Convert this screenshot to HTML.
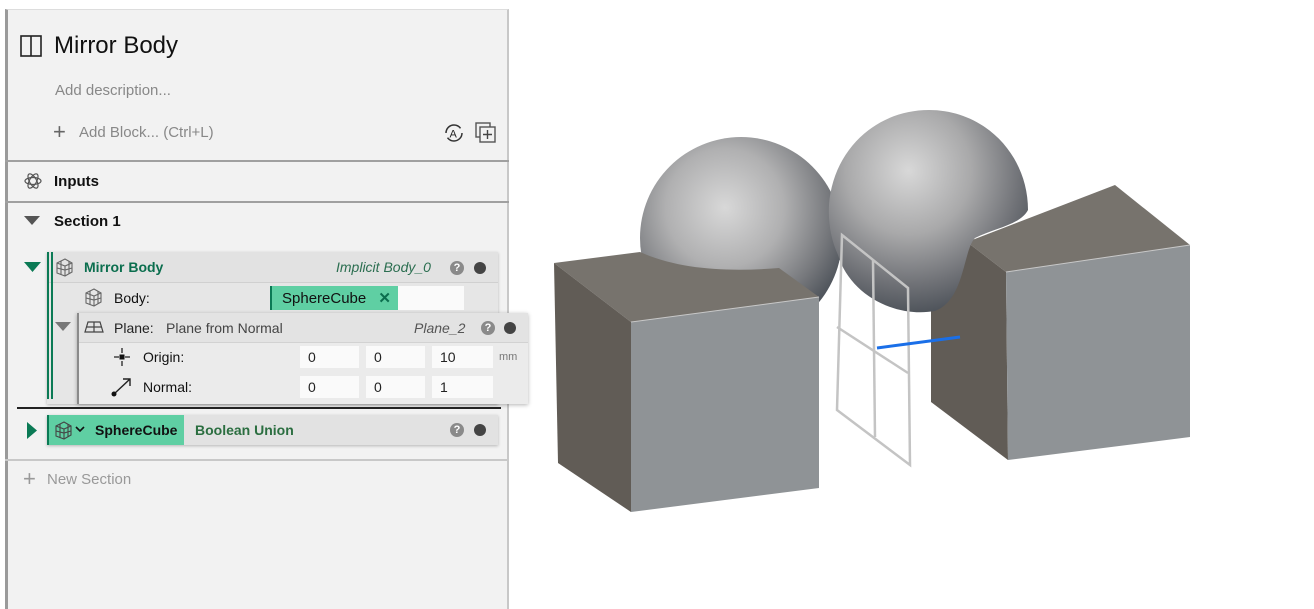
<!DOCTYPE html>
<html><head><style>
*{margin:0;padding:0;box-sizing:border-box}
body{width:1314px;height:596px;background:#fff;position:relative;overflow:hidden;font-family:"Liberation Sans",Arial,sans-serif}
.a{position:absolute;white-space:nowrap}
.panel{position:absolute;left:5px;top:9px;width:504px;height:600px;background:#f2f2f2;border-left:3px solid #9a9a9a;border-right:2px solid #c8c8c8;border-top:1px solid #ddd}
.hl{position:absolute;height:2px;background:#a0a0a0}
.t{font-size:15px;color:#111}
.box{position:absolute;background:#fafafa;height:22px;font-size:14px;color:#222;padding:3px 8px}
.q{position:absolute;width:14px;height:14px;border-radius:50%;background:#8a8a8a;color:#fff;font-size:11px;font-weight:bold;text-align:center;line-height:14px}
.d{position:absolute;width:12px;height:12px;border-radius:50%;background:#444}
</style></head><body>
<div class="panel"></div>
<svg class="a" style="left:20px;top:35px" width="22" height="22"><rect x="1" y="1" width="20" height="20" fill="none" stroke="#222" stroke-width="1.6"/><line x1="11" y1="1" x2="11" y2="21" stroke="#222" stroke-width="1.6"/></svg>
<div class="a" style="left:54px;top:32px;font-size:24px;color:#111">Mirror Body</div>
<div class="a" style="left:55px;top:82px;font-size:15px;color:#888">Add description...</div>
<div class="a" style="left:53px;top:119px;font-size:22px;color:#666;font-weight:300">+</div>
<div class="a" style="left:79px;top:124px;font-size:15px;color:#888">Add Block... (Ctrl+L)</div>
<svg class="a" style="left:443px;top:122px" width="22" height="22"><circle cx="11" cy="11" r="8" fill="none" stroke="#333" stroke-width="1.5" stroke-dasharray="20 5"/><text x="6.5" y="15.5" font-size="11" font-family="Liberation Sans" fill="#222">A</text></svg>
<svg class="a" style="left:474px;top:121px" width="24" height="24"><rect x="2" y="2" width="14" height="14" fill="none" stroke="#555" stroke-width="1.4"/><rect x="6" y="6" width="15" height="15" fill="#f2f2f2" stroke="#555" stroke-width="1.4"/><path d="M13.5 9v9M9 13.5h9" stroke="#444" stroke-width="1.4"/></svg>
<div class="hl" style="left:5px;top:160px;width:504px"></div>
<svg class="a" style="left:23px;top:171px" width="20" height="20"><g fill="none" stroke="#555" stroke-width="1.2"><ellipse cx="10" cy="10" rx="8" ry="3.5"/><ellipse cx="10" cy="10" rx="8" ry="3.5" transform="rotate(60 10 10)"/><ellipse cx="10" cy="10" rx="8" ry="3.5" transform="rotate(-60 10 10)"/></g></svg>
<div class="a t" style="left:54px;top:173px;font-weight:bold;font-size:15px">Inputs</div>
<div class="hl" style="left:5px;top:201px;width:504px"></div>
<svg class="a" style="left:24px;top:216px" width="16" height="10"><path d="M0 0h16L8 9z" fill="#555"/></svg>
<div class="a t" style="left:54px;top:213px;font-weight:bold">Section 1</div>
<svg class="a" style="left:24px;top:262px" width="18" height="11"><path d="M0 0h17L8.5 10z" fill="#0b7a55"/></svg>
<div class="a" style="left:47px;top:252px;width:451px;height:152px;background:#e6e6e6;box-shadow:0 1px 3px rgba(0,0,0,.25)"></div>
<div class="a" style="left:47px;top:252px;width:451px;height:31px;background:#e2e2e2;border-bottom:1px solid #d0d0d0"></div>
<div class="a" style="left:47px;top:252px;width:2px;height:147px;background:#0b7a55"></div>
<div class="a" style="left:51px;top:252px;width:2px;height:147px;background:#0b7a55"></div>
<svg class="a" style="left:54px;top:257px" width="20" height="20"><g fill="none" stroke="#666" stroke-width="1.1"><path d="M3 6l8-4 7 4v9l-7 4-8-3z"/><path d="M3 6l8 3 7-3M11 9v10M3 11l8 2 7-2M7 4v14M15 4v13"/></g></svg>
<div class="a" style="left:84px;top:259px;font-size:14px;font-weight:bold;color:#0b6e4e">Mirror Body</div>
<div class="a" style="left:336px;top:259px;font-size:14px;font-style:italic;color:#2b6e50">Implicit Body_0</div>
<div class="q" style="left:450px;top:261px">?</div><div class="d" style="left:474px;top:262px"></div>
<svg class="a" style="left:83px;top:287px" width="20" height="20"><g fill="none" stroke="#666" stroke-width="1.1"><path d="M3 6l8-4 7 4v9l-7 4-8-3z"/><path d="M3 6l8 3 7-3M11 9v10M3 11l8 2 7-2M7 4v14M15 4v13"/></g></svg>
<div class="a t" style="left:114px;top:290px;font-size:14px">Body:</div>
<div class="a" style="left:270px;top:286px;width:194px;height:24px;background:#fafafa"></div>
<div class="a" style="left:270px;top:286px;width:128px;height:24px;background:#5fcfa3;border-left:2px solid #0b7a55;font-size:15px;color:#111;padding:3px 10px">SphereCube <span style="color:#0b6e4e;font-weight:bold;margin-left:8px">✕</span></div>
<svg class="a" style="left:55px;top:322px" width="16" height="10"><path d="M0 0h16L8 9z" fill="#777"/></svg>
<div class="a" style="left:77px;top:313px;width:451px;height:91px;background:#ebebeb;box-shadow:0 1px 4px rgba(0,0,0,.3);border-left:2px solid #8a8a8a"></div>
<div class="a" style="left:79px;top:313px;width:449px;height:30px;background:#e3e3e3;border-bottom:1px solid #d2d2d2"></div>
<svg class="a" style="left:84px;top:320px" width="20" height="14"><g fill="none" stroke="#444" stroke-width="1.2"><path d="M4 2h12l3 10H1z"/><path d="M2.5 7h15M10 2v10"/></g></svg>
<div class="a" style="left:114px;top:320px;font-size:14px;color:#222">Plane:</div>
<div class="a" style="left:166px;top:320px;font-size:14px;color:#444">Plane from Normal</div>
<div class="a" style="left:414px;top:320px;font-size:14px;font-style:italic;color:#555">Plane_2</div>
<div class="q" style="left:481px;top:321px">?</div><div class="d" style="left:504px;top:322px"></div>
<svg class="a" style="left:112px;top:347px" width="20" height="20"><path d="M10 1v5M10 14v5M2 10h5M13 10h5" stroke="#222" stroke-width="1.3"/><rect x="7.5" y="7.5" width="5" height="5" fill="#111"/></svg>
<div class="a t" style="left:143px;top:349px;font-size:14px">Origin:</div>
<div class="box" style="left:300px;top:346px;width:59px">0</div>
<div class="box" style="left:366px;top:346px;width:59px">0</div>
<div class="box" style="left:432px;top:346px;width:61px">10</div>
<div class="a" style="left:499px;top:351px;font-size:11px;color:#777">mm</div>
<svg class="a" style="left:110px;top:376px" width="24" height="22"><path d="M4 18L20 3M13 3h7v7" fill="none" stroke="#222" stroke-width="1.4"/><circle cx="4" cy="18" r="2.5" fill="#111"/></svg>
<div class="a t" style="left:143px;top:379px;font-size:14px">Normal:</div>
<div class="box" style="left:300px;top:376px;width:59px">0</div>
<div class="box" style="left:366px;top:376px;width:59px">0</div>
<div class="box" style="left:432px;top:376px;width:61px">1</div>
<div class="a" style="left:17px;top:407px;width:484px;height:2px;background:#222"></div>
<svg class="a" style="left:27px;top:422px" width="11" height="18"><path d="M0 0v17l10-8.5z" fill="#0b7a55"/></svg>
<div class="a" style="left:47px;top:415px;width:451px;height:30px;background:#e2e2e2;box-shadow:0 1px 3px rgba(0,0,0,.25)"></div>
<div class="a" style="left:47px;top:415px;width:137px;height:30px;background:#5fcfa3;border-left:2px solid #0b7a55"></div>
<svg class="a" style="left:53px;top:420px" width="20" height="20"><g fill="none" stroke="#444" stroke-width="1.1"><path d="M3 6l8-4 7 4v9l-7 4-8-3z"/><path d="M3 6l8 3 7-3M11 9v10M3 11l8 2 7-2M7 4v14M15 4v13"/></g></svg>
<svg class="a" style="left:75px;top:426px" width="10" height="7"><path d="M1 1l4 4 4-4" fill="none" stroke="#111" stroke-width="1.6"/></svg>
<div class="a" style="left:95px;top:422px;font-size:14px;font-weight:bold;color:#111">SphereCube</div>
<div class="a" style="left:195px;top:422px;font-size:14px;font-weight:bold;color:#2b6e40">Boolean Union</div>
<div class="q" style="left:450px;top:423px">?</div><div class="d" style="left:474px;top:424px"></div>
<div class="a" style="left:5px;top:459px;width:504px;height:2px;background:#c8c8c8"></div>
<div class="a" style="left:23px;top:466px;font-size:22px;color:#999;font-weight:300">+</div>
<div class="a" style="left:47px;top:471px;font-size:15px;color:#999">New Section</div>
<svg class="a" style="left:0;top:0" width="1314" height="596">
<defs>
<radialGradient id="sg" cx="0.42" cy="0.35" r="0.65"><stop offset="0" stop-color="#d8d8d8"/><stop offset="0.45" stop-color="#b0b0b1"/><stop offset="0.8" stop-color="#76787c"/><stop offset="1" stop-color="#50555c"/></radialGradient>
<radialGradient id="sg2" cx="0.4" cy="0.3" r="0.7"><stop offset="0" stop-color="#d8d8d8"/><stop offset="0.45" stop-color="#a9a9aa"/><stop offset="0.8" stop-color="#707277"/><stop offset="1" stop-color="#50555c"/></radialGradient>
</defs>
<!-- left sphere + cube -->
<circle cx="741" cy="238" r="101" fill="url(#sg)"/>
<path d="M554,263 L640,252 C680,270 730,272 779,268 L819,297 L631,322 Z" fill="#77736d"/>
<polygon points="554,263 631,322 631,512 558,463" fill="#615c56"/>
<polygon points="631,322 819,297 819,488 631,512" fill="#8f9396"/>
<line x1="631" y1="322" x2="819" y2="297" stroke="#c8c8c8" stroke-width="1"/>
<!-- right cube -->
<polygon points="967,242 1115,185 1190,245 1006,272" fill="#77736d"/>
<polygon points="931,300 967,242 1006,272 1008,460 931,402" fill="#615c56"/>
<polygon points="1006,272 1190,245 1190,437 1008,460" fill="#8f9396"/>
<line x1="1006" y1="272" x2="1190" y2="245" stroke="#c8c8c8" stroke-width="1"/>
<!-- right blob -->
<path d="M829,205 C833,150 876,110 929,110 C985,110 1028,155 1028,210 C1020,225 995,228 975,238 C963,250 965,300 935,311 C895,318 850,295 838,255 C831,240 828,222 829,205 Z" fill="url(#sg2)"/>
<g fill="none" stroke="#c4c4c4" stroke-width="2.5">
<polygon points="842,235 908,288 910,465 837,410"/>
<line x1="873" y1="260" x2="875" y2="437"/>
<line x1="837" y1="327" x2="908" y2="373"/>
</g>
<line x1="877" y1="348" x2="960" y2="337" stroke="#1a6fe8" stroke-width="3"/>
</svg>
</body></html>
